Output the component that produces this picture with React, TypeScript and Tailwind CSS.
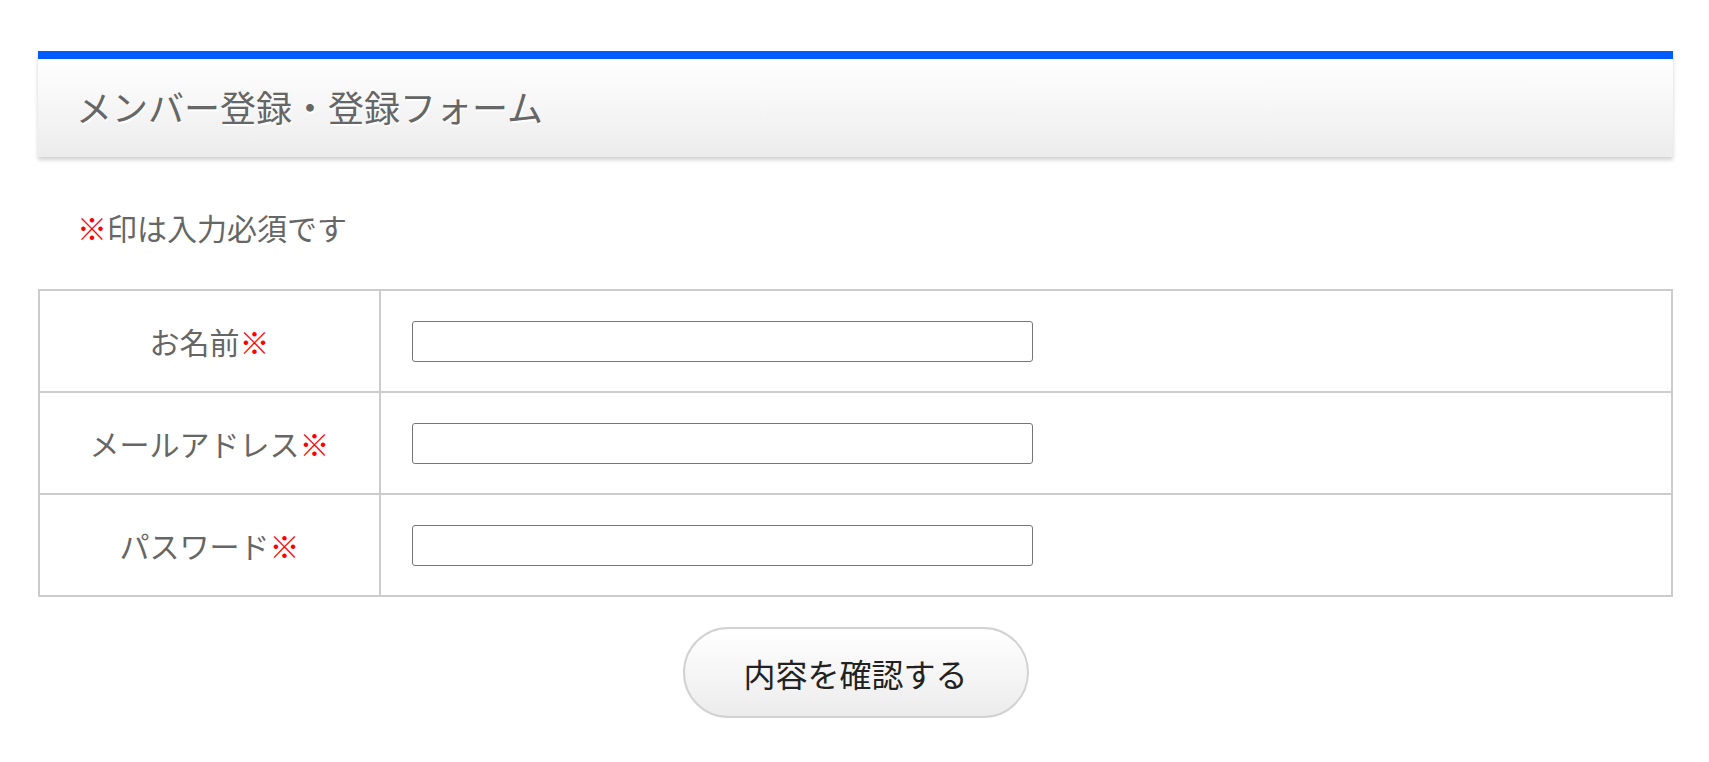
const font = { fontFamily: "'Noto Sans CJK JP', 'Noto Sans', sans-serif" };

const fields = [
    { label: "お名前", type: "text" },
    { label: "メールアドレス", type: "email" },
    { label: "パスワード", type: "password" },
];

const App = () => {
    return (
        <div className="min-h-screen w-full bg-white" style={font}>
            <div className="ml-[38px] mr-[36px] pt-[51px] pb-10">
                <div className="h-[106px] border-t-8 border-[#005cff] bg-gradient-to-b from-white to-[#ececec] shadow-[0_3px_4px_rgba(0,0,0,0.18)] flex items-center pl-[38px] pb-[4px]">
                    <h1 className="text-[36px] leading-none font-normal text-[#666] [text-shadow:1px_2px_0_#fff]">
                        メンバー登録・登録フォーム
                    </h1>
                </div>

                <p className="mt-[49px] pl-[39px] text-[30px] leading-[43px] text-[#666]">
                    <span className="text-[#ff0000]">※</span>印は入力必須です
                </p>

                <div className="mt-[40px] border-2 border-[#cccccc]">
                    {fields.map((f, i) => (
                        <div key={f.label} className={`flex ${i > 0 ? "h-[102px] border-t-2 border-[#cccccc]" : "h-[100px]"}`}>
                            <div className="w-[341px] shrink-0 border-r-2 border-[#cccccc] flex items-center justify-center text-[30px] text-[#666]">
                                {f.label}
                                <span className="text-[#ff0000]">※</span>
                            </div>
                            <div className="flex-1 flex items-center pl-[31px]">
                                <input
                                    type={f.type}
                                    className="w-[621px] h-[41px] border border-[#767676] rounded-[3px] bg-white px-2 text-[20px] outline-none"
                                />
                            </div>
                        </div>
                    ))}
                </div>

                <div className="mt-[30px] flex justify-center">
                    <button className="w-[346px] h-[91px] rounded-full border-2 border-[#d2d2d2] bg-gradient-to-b from-white to-[#ececec] text-[32px] text-[#222]">
                        内容を確認する
                    </button>
                </div>
            </div>
        </div>
    );
};

export default App;
